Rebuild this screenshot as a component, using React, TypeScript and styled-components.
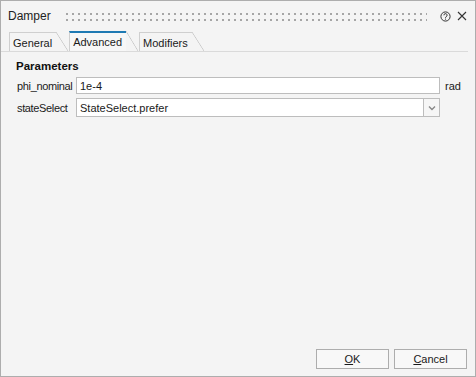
import React from "react";
import styled, { createGlobalStyle } from "styled-components";

const GlobalStyle = createGlobalStyle`
  html, body {
    margin: 0;
    padding: 0;
    background: #f4f4f4;
  }
  * {
    box-sizing: border-box;
  }
`;

const Window = styled.div`
  display: flex;
  flex-direction: column;
  width: 476px;
  height: 377px;
  background: #f4f4f4;
  border: 1px solid #adadad;
  font-family: "Liberation Sans", Arial, sans-serif;
  font-size: 11px;
  color: #1a1a1a;
`;

const TitleBar = styled.div`
  display: flex;
  align-items: center;
  height: 30px;
  padding: 0 8px 0 7px;
  gap: 15px;
`;

const Title = styled.span`
  font-size: 12px;
  color: #222;
`;

// two rows of grip dots between the title and the icons
const Grip = styled.div`
  flex: 1;
  height: 8px;
  margin-top: 1px;
  background:
    linear-gradient(to right, #a6a6a6 2px, transparent 2px) 0 0 / 6px 2px repeat-x,
    linear-gradient(to right, #a6a6a6 2px, transparent 2px) 0 6px / 6px 2px repeat-x;
`;

const TitleIcons = styled.div`
  display: flex;
  align-items: center;
  gap: 6px;
  margin-left: -2px;
  color: #333;
`;

const TabStrip = styled.div`
  display: flex;
  align-items: flex-end;
  height: 21px;
  margin-right: 7px;
  padding-left: 8px;
  border-bottom: 1px solid #dadada;
`;

const Tab = styled.div<{ $active?: boolean }>`
  position: relative;
  display: flex;
  align-items: center;
  height: ${(p) => (p.$active ? "20px" : "19px")};
  margin-right: 13px;
  padding: ${(p) => (p.$active ? "0 4px 0 3px" : "1px 4px 0 3px")};
  font-size: 11px;
  color: #1a1a1a;
  background: ${(p) => (p.$active ? "#f7f7f7" : "#f4f4f4")};
  border-left: 1px solid #cfcfcf;
  border-top: ${(p) => (p.$active ? "2px solid #1f7ab3" : "1px solid #cfcfcf")};

  &::after {
    content: "";
    position: absolute;
    left: 100%;
    top: ${(p) => (p.$active ? "-2px" : "-1px")};
    width: 12px;
    height: calc(100% + ${(p) => (p.$active ? "2px" : "1px")});
    background: linear-gradient(
      to top right,
      transparent calc(50% - 0.7px),
      #c9c9c9 50%,
      transparent calc(50% + 0.7px)
    );
  }
`;

const Page = styled.div`
  flex: 1;
  display: flex;
  flex-direction: column;
  padding: 8px 35px 0 15px;
`;

const SectionTitle = styled.div`
  font-weight: bold;
  font-size: 11.5px;
  color: #111;
  margin-bottom: 5px;
`;

const Row = styled.div`
  display: grid;
  grid-template-columns: 60px 1fr;
  align-items: center;
  margin-bottom: 4px;
  position: relative;
`;

const Label = styled.span`
  font-size: 11px;
  letter-spacing: -0.35px;
  color: #1a1a1a;
  padding-left: 1px;
`;

const Field = styled.div`
  display: flex;
  align-items: center;
  height: 17px;
  padding: 0 3px;
  background: #fff;
  border: 1px solid #bdbdbd;
  font-size: 11px;
`;

const Unit = styled.span`
  position: absolute;
  left: calc(100% + 5px);
  font-size: 11px;
`;

const Combo = styled.div`
  display: flex;
  height: 19px;
  background: #fff;
  border: 1px solid #bdbdbd;
`;

const ComboText = styled.div`
  flex: 1;
  display: flex;
  align-items: center;
  padding: 0 3px;
  font-size: 11px;
`;

const ComboButton = styled.div`
  width: 16px;
  display: flex;
  align-items: center;
  justify-content: center;
  background: #f6f6f6;
  border-left: 1px solid #bdbdbd;
`;

const Footer = styled.div`
  display: flex;
  justify-content: flex-end;
  gap: 5px;
  padding: 0 8px 7px 0;
`;

const Button = styled.button`
  width: 73px;
  height: 20px;
  padding: 0;
  background: #f8f8f8;
  border: 1px solid #adadad;
  font-family: "Liberation Sans", Arial, sans-serif;
  font-size: 11px;
  color: #1a1a1a;

  u {
    text-decoration: underline;
    text-underline-offset: 1px;
  }
`;

export default function App() {
  return (
    <>
      <GlobalStyle />
      <Window>
        <TitleBar>
          <Title>Damper</Title>
          <Grip />
          <TitleIcons>
            <svg width="11" height="11" viewBox="0 0 11 11">
              <circle cx="5.5" cy="5.5" r="4.6" fill="none" stroke="#333" strokeWidth="1" />
              <path d="M3.9 4.3a1.6 1.6 0 1 1 2.3 1.4c-.5.3-.7.5-.7 1.1" fill="none" stroke="#333" strokeWidth="1" />
              <rect x="5" y="7.6" width="1" height="1" fill="#333" />
            </svg>
            <svg width="10" height="10" viewBox="0 0 10 10">
              <path d="M1 1 L9 9 M9 1 L1 9" stroke="#333" strokeWidth="1.1" />
            </svg>
          </TitleIcons>
        </TitleBar>
        <TabStrip>
          <Tab>General</Tab>
          <Tab $active>Advanced</Tab>
          <Tab>Modifiers</Tab>
        </TabStrip>
        <Page>
          <SectionTitle>Parameters</SectionTitle>
          <Row>
            <Label>phi_nominal</Label>
            <Field>
              1e-4
              <Unit>rad</Unit>
            </Field>
          </Row>
          <Row>
            <Label>stateSelect</Label>
            <Combo>
              <ComboText>StateSelect.prefer</ComboText>
              <ComboButton>
                <svg width="8" height="6" viewBox="0 0 8 6">
                  <path d="M1 1.5 L4 4.5 L7 1.5" fill="none" stroke="#888" strokeWidth="1.4" />
                </svg>
              </ComboButton>
            </Combo>
          </Row>
        </Page>
        <Footer>
          <Button>
            <u>O</u>K
          </Button>
          <Button>
            <u>C</u>ancel
          </Button>
        </Footer>
      </Window>
    </>
  );
}
